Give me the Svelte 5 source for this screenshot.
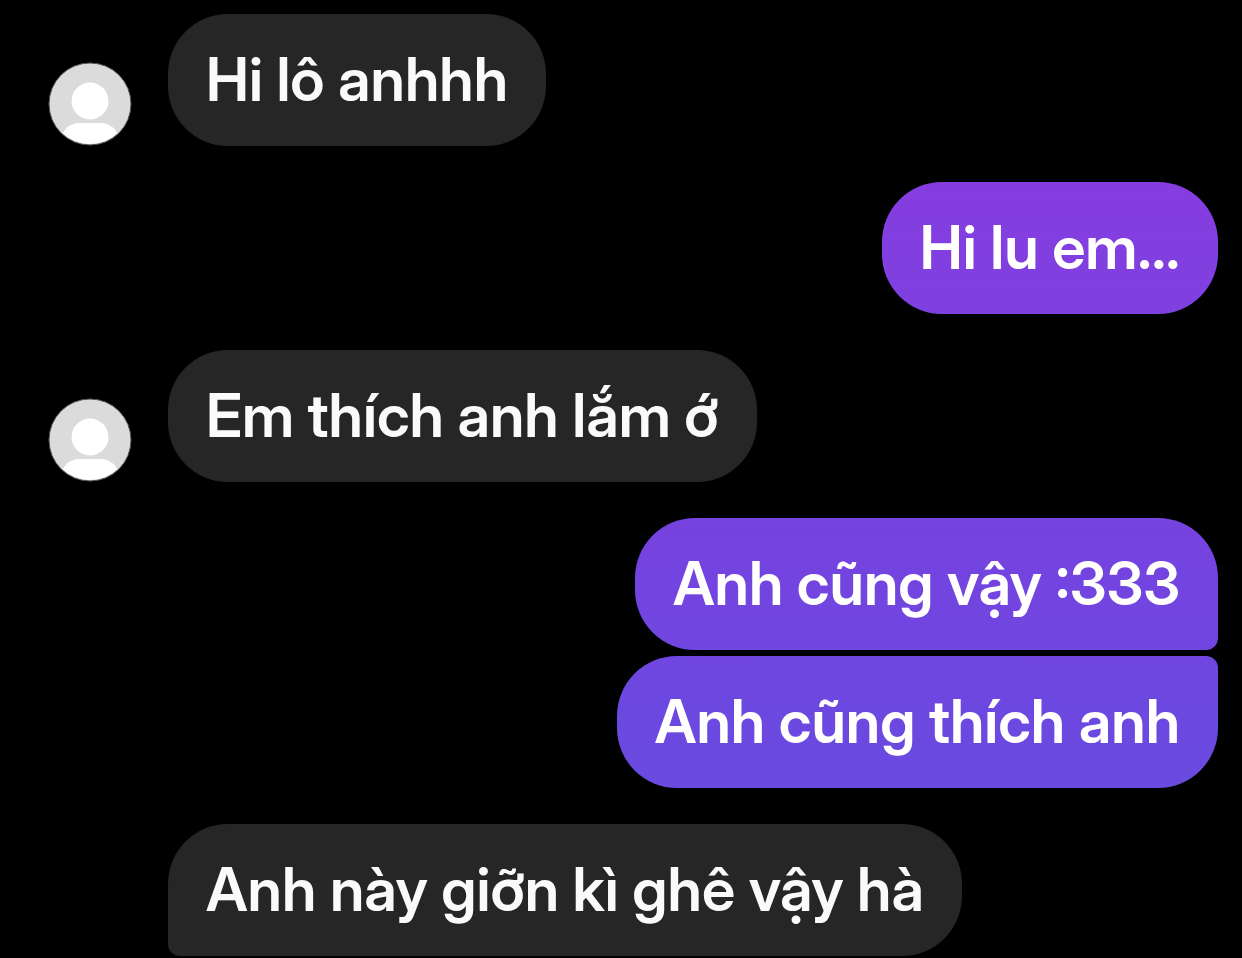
<script>
	const groups = [
		{ from: 'them', avatar: true, messages: ['Hi lô anhhh'] },
		{ from: 'me', messages: ['Hi lu em...'] },
		{ from: 'them', avatar: true, messages: ['Em thích anh lắm ớ'] },
		{ from: 'me', messages: ['Anh cũng vậy :333', 'Anh cũng thích anh'] },
		{ from: 'them', avatar: false, continues: true, messages: ['Anh này giỡn kì ghê vậy hà'] }
	];

	const gradients = {
		'Hi lu em...': ['#853de0', '#7f40e0'],
		'Anh cũng vậy :333': ['#7642e0', '#7046e0'],
		'Anh cũng thích anh': ['#6f46e0', '#694be0']
	};

	const tint = (text) => {
		const colors = gradients[text];
		return colors ? `background: linear-gradient(${colors[0]}, ${colors[1]})` : undefined;
	};
</script>

<main class="chat">
	{#each groups as group}
		<section class="group {group.from}" class:continues={group.continues}>
			{#if group.from === 'them'}
				<div class="side">
					{#if group.avatar}
						<svg class="avatar" viewBox="0 0 84 84" role="img" aria-label="Profile picture">
							<defs>
								<clipPath id="face"><circle cx="42" cy="42" r="40" /></clipPath>
							</defs>
							<circle cx="42" cy="42" r="41" fill="#dbdbdb" />
							<g clip-path="url(#face)" fill="#fff">
								<circle cx="42" cy="39" r="18.5" />
								<path d="M14 84V76C14 68 22 61 31 61H53C62 61 70 68 70 76V84Z" />
							</g>
							<circle cx="42" cy="42" r="41" fill="none" stroke="#555" stroke-width="1" />
						</svg>
					{/if}
				</div>
			{/if}
			<div class="messages">
				{#each group.messages as text}
					<p class="bubble" style={tint(text)}>{text}</p>
				{/each}
			</div>
		</section>
	{/each}
</main>

<style>
	:global(body) {
		margin: 0;
		background: #000;
	}

	.chat {
		display: flex;
		flex-direction: column;
		gap: 36px;
		padding: 14px 24px 2px 48px;
		font-family: 'Inter Display', Inter, 'Noto Sans', sans-serif;
	}

	.group {
		display: flex;
		align-items: flex-end;
	}

	.me {
		justify-content: flex-end;
	}

	.side {
		flex: none;
		width: 120px;
	}

	.avatar {
		display: block;
		width: 84px;
		height: 84px;
	}

	.messages {
		display: flex;
		flex-direction: column;
		align-items: flex-start;
		gap: 6px;
	}

	.me .messages {
		align-items: flex-end;
	}

	.bubble {
		margin: 0;
		padding: 25px 38px 27px;
		border-radius: 60px;
		background: #262626;
		color: #fafafa;
		font-size: 60px;
		font-weight: 600;
		font-variation-settings: 'opsz' 32;
		line-height: 80px;
	}

	.me .bubble {
		color: #fff;
	}

	.me .bubble:not(:last-child) {
		border-bottom-right-radius: 12px;
	}

	.me .bubble:not(:first-child) {
		border-top-right-radius: 12px;
	}

	/* more messages follow below this one */
	.continues .bubble {
		border-bottom-left-radius: 12px;
	}
</style>
